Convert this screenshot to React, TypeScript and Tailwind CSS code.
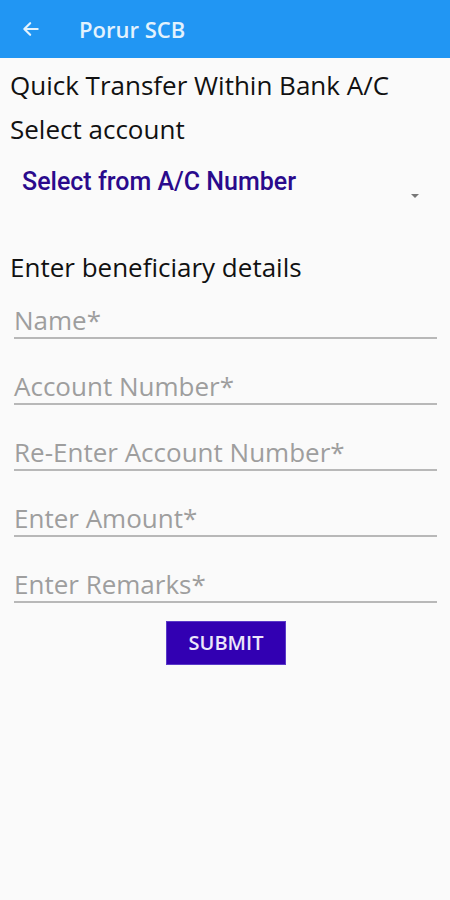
import React from 'react';

const fields = ['Name*', 'Account Number*', 'Re-Enter Account Number*', 'Enter Amount*', 'Enter Remarks*'];

export default function App() {
  return (
    <div className="w-[450px] h-[900px] bg-[#fafafa] font-['Open_Sans',sans-serif]">
      {/* toolbar */}
      <div className="h-[58px] bg-[#2196f3] flex items-center">
        <svg className="ml-[21px] w-[20px] h-[20px]" viewBox="0 0 24 24" fill="none" stroke="#e3f2fd" strokeWidth="2.6" strokeLinecap="round" strokeLinejoin="round">
          <path d="M20 12H5M11 5l-7 7 7 7" />
        </svg>
        <span className="ml-[38px] text-[22px] font-semibold text-[#e3f2fd]">Porur SCB</span>
      </div>

      <div className="px-[10px]">
        <div className="mt-[5px] text-[26px] leading-[44px] font-medium text-[#111]">Quick Transfer Within Bank A/C</div>
        <div className="text-[26px] leading-[44px] font-medium text-[#111]">Select account</div>

        {/* spinner */}
        <div className="relative h-[94px]">
          <span className="absolute left-[12px] top-[16px] leading-[30px] font-['Roboto',sans-serif] font-medium text-[25px] text-[#2a0a8c]">
            Select from A/C Number
          </span>
          <span className="absolute left-[401px] top-[43px] w-0 h-0 border-l-[4px] border-r-[4px] border-t-[4px] border-l-transparent border-r-transparent border-t-[#777]" />
        </div>

        <div className="text-[26px] leading-[44px] font-medium text-[#111]">Enter beneficiary details</div>

        <div className="mt-[14px] flex flex-col gap-[30px]">
          {fields.map((f) => (
            <div key={f} className="ml-[4px] mr-[3px]">
              <div className="text-[26px] leading-[34px] text-[#9e9e9e]">{f}</div>
              <div className="h-[2px] bg-[#b8b8b8]" />
            </div>
          ))}
        </div>

        <div className="flex justify-center mt-[18px] ml-[2px]">
          <button className="w-[120px] h-[44px] bg-[#3200b2] text-[#ece6fa] text-[20px] font-semibold border border-[#5a3ac8]">
            SUBMIT
          </button>
        </div>
      </div>
    </div>
  );
}
